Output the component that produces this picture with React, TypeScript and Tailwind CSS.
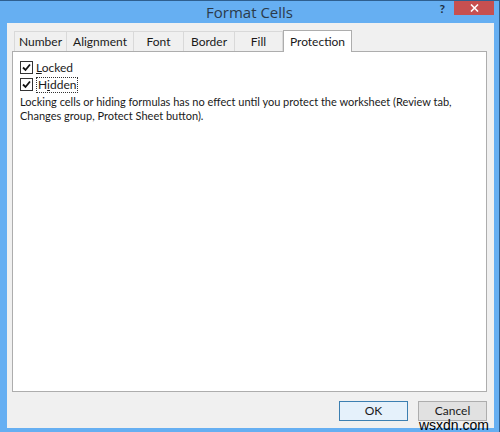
import React from 'react';

const tabs = ['Number', 'Alignment', 'Font', 'Border', 'Fill'];
const tabWidths = ['w-[53px]', 'w-[67px]', 'w-[50px]', 'w-[51px]', 'w-[48px]'];

function CheckBox() {
  return (
    <span className="flex h-[13px] w-[13px] items-center justify-center border border-[#333] bg-white">
      <svg width="9" height="9" viewBox="0 0 9 9">
        <path d="M1 4.5 L3.5 7 L8 1.5" fill="none" stroke="#111" strokeWidth="1.8" />
      </svg>
    </span>
  );
}

export default function App() {
  return (
    <div className="flex h-[432px] w-[500px] flex-col border-t border-r border-[#2f5f8f] bg-[#66aff2] font-['Lato','Open_Sans',sans-serif] text-[12px] text-[#1a1a1a]">
      {/* title bar */}
      <div className="relative h-[22px] shrink-0">
        <div className="pt-[1px] text-center font-['Open_Sans',sans-serif] text-[15px] leading-[20px] text-[#2b3a4a]">Format Cells</div>
        <span className="absolute top-[2px] right-[54px] text-[12px] font-bold leading-[12px] text-[#203040]">?</span>
        <div className="absolute top-0 right-[5px] flex h-[14px] w-[40px] items-center justify-center bg-[#c75050]">
          <svg width="9" height="8" viewBox="0 0 9 8">
            <path d="M1 0.5 L8 7.5 M8 0.5 L1 7.5" stroke="#fff" strokeWidth="1.6" />
          </svg>
        </div>
      </div>

      {/* dialog body */}
      <div className="mb-[4px] ml-[7px] mr-[5px] flex flex-1 flex-col bg-[#f0f0f0] pt-[6px] pl-[5px] pr-[7px]">
        <div className="flex h-[22px] items-end pl-[2px]">
          {tabs.map((t, i) => (
            <div
              key={t}
              className={`flex h-[20px] ${tabWidths[i]} items-center justify-center border border-b-0 border-[#d9d9d9] bg-[#f0f0f0] text-[12px] ${i > 0 ? 'border-l-0' : ''}`}
            >
              {t}
            </div>
          ))}
          <div className="relative -mb-px z-10 flex h-[22px] w-[69px] items-start justify-center border border-b-0 border-[#adadad] bg-white pt-[2px] text-[12px]">
            Protection
          </div>
        </div>
        <div className="h-[341px] border border-[#adadad] bg-white px-[7px] pt-[7px]">
          <div className="flex items-center gap-[3px] h-[17px]">
            <CheckBox />
            <span>
              <span className="underline">L</span>ocked
            </span>
          </div>
          <div className="flex items-center gap-[3px] h-[17px]">
            <CheckBox />
            <span className="border border-dotted border-[#333] px-px leading-[14px]">
              H<span className="underline">i</span>dden
            </span>
          </div>
          <p className="mt-[2px] whitespace-nowrap text-[11px] leading-[14px]">
            Locking cells or hiding formulas has no effect until you protect the worksheet (Review tab,
            <br />
            Changes group, Protect Sheet button).
          </p>
        </div>
        <div className="relative flex flex-1 justify-end gap-[10px] pt-[9px]">
          <button className="h-[20px] w-[69px] border border-[#3c7fb1] bg-[#e5f1fb] text-[12px]">OK</button>
          <button className="h-[20px] w-[69px] border border-[#adadad] bg-[#e1e1e1] text-[12px]">Cancel</button>
          <span className="absolute right-[-2px] bottom-[-4px] text-[14px] leading-[14px] text-black font-['Liberation_Sans',sans-serif]">wsxdn.com</span>
        </div>
      </div>
    </div>
  );
}
